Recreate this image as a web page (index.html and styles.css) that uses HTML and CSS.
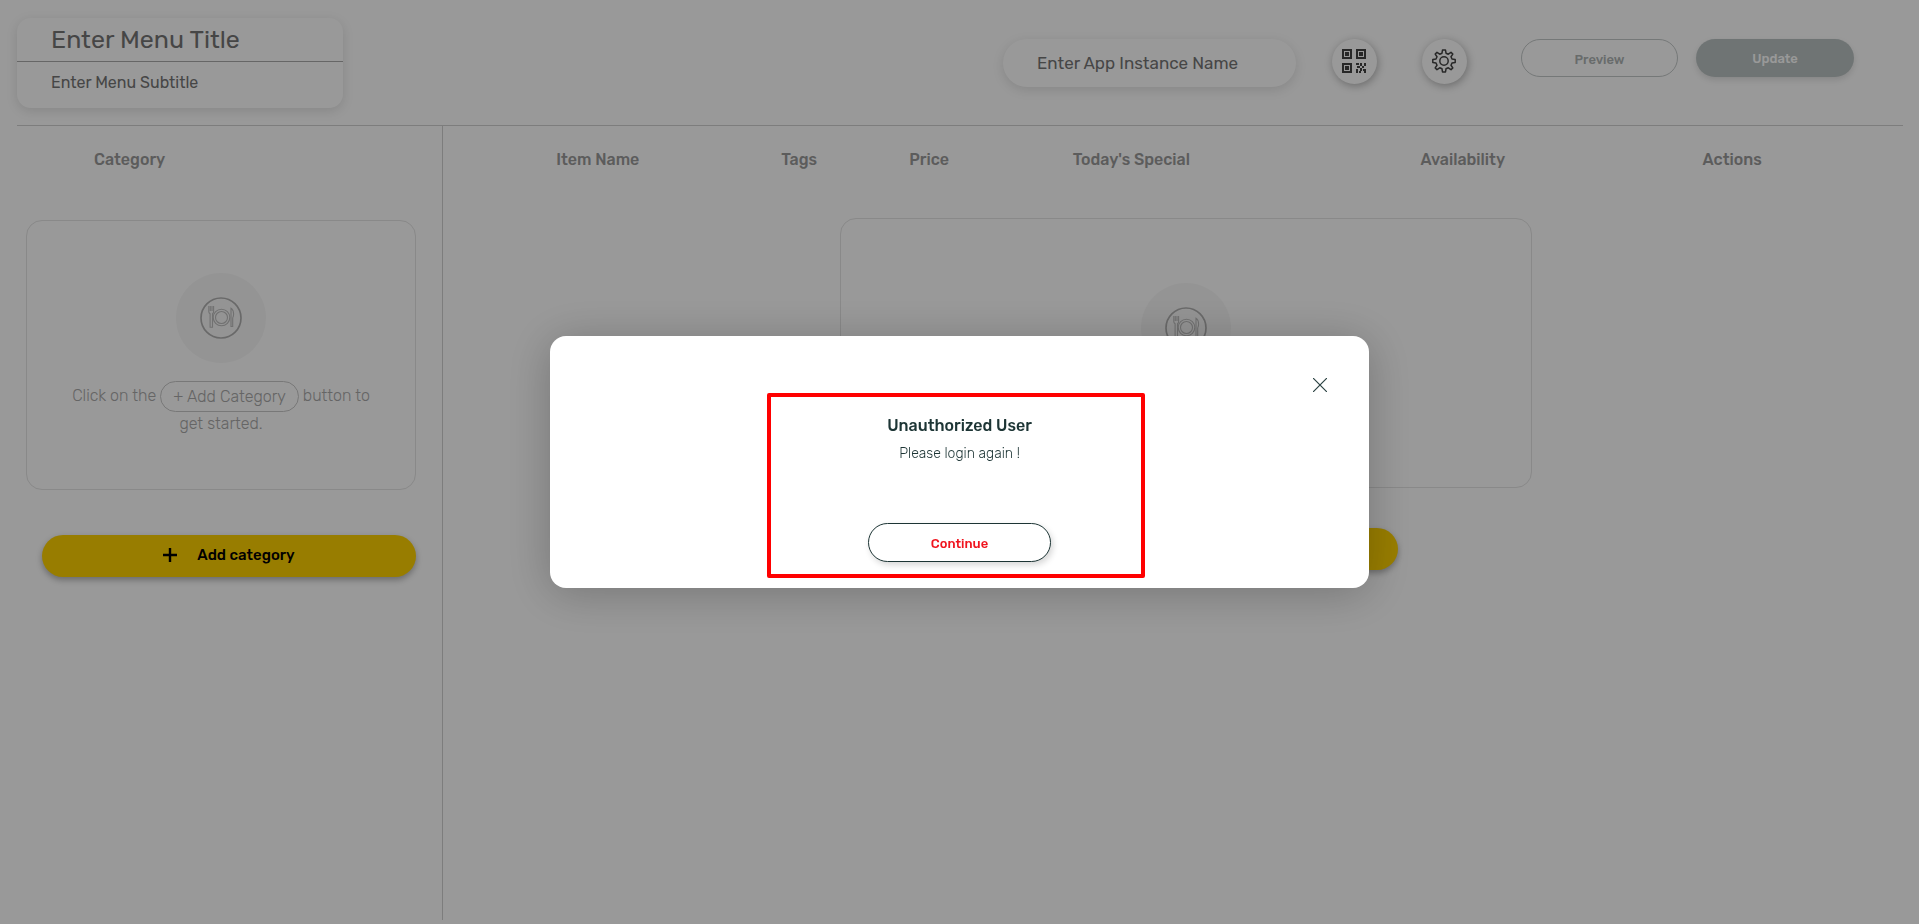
FILE: index.html
```html
<!DOCTYPE html>
<html lang="en">
  <head>
    <meta charset="utf-8">
    <title>Menu</title>
    <meta name="viewport" content="width=device-width, initial-scale=1">
    <link rel="stylesheet" href="styles.css">
  </head>
  <body>
    <!-- shared icon -->
    <svg class="sprite" width="0" height="0" aria-hidden="true">
      <symbol id="plate" viewBox="0 0 42 42">
        <circle cx="21" cy="21" r="20" fill="none" stroke="#b0b0b0" stroke-width="1.7"/>
        <g fill="none" stroke="#bcbcbc" stroke-width="1.1">
          <circle cx="21.5" cy="20.5" r="8.3"/>
          <circle cx="21.5" cy="20.5" r="6"/>
          <path d="M8.800 9v5.500q0 1.600 1.300 2.200v13.600h2.400V16.700q1.100-.6 1.100-2.200V9M10.300 9v5M12 9v5"/>
          <path d="M31 29.500V11.200q2.600 1.600 2.600 5.800 0 2.600-.9 4v8.500z"/>
        </g>
      </symbol>
    </svg>

    <div class="page">
      <header class="header">
        <div class="title-card">
          <input class="menu-title" type="text" placeholder="Enter Menu Title" aria-label="Menu title">
          <input class="menu-subtitle" type="text" placeholder="Enter Menu Subtitle" aria-label="Menu subtitle">
        </div>
        <div class="tools">
          <input class="app-name" type="text" placeholder="Enter App Instance Name" aria-label="App instance name">
          <div class="round-buttons">
            <button class="round" type="button" aria-label="QR code">
              <svg width="24" height="24" viewBox="0 0 24 24">
                <g fill="none" stroke="#444" stroke-width="2">
                  <path d="M1 1h8v8H1zM15 1h8v8h-8zM1 15h8v8H1z"/>
                </g>
                <path fill="#444" d="M3 3h4v4H3zM17 3h4v4h-4zM3 17h4v4H3zM14 14h3v2h-3zM18 14h2v3h-2zM22 14h2v3h-2zM15 17h3v2h-3zM20 17h2v2h-2zM14 20h2v4h-2zM18 19h2v3h-2zM21 20h3v2h-3zM17 22h2v2h-2zM22 22h2v2h-2z"/>
              </svg>
            </button>
            <button class="round" type="button" aria-label="Settings">
              <svg width="24" height="24" viewBox="0 0 24 24" fill="none" stroke="#444" stroke-width="1.500" stroke-linejoin="round">
                <path d="M10.500 1h3l.5 3.200 2.300 1L19 3.300 20.800 5.100 19 7.700l1 2.300 3.200.5v3l-3.200.5-1 2.300 1.800 2.600-1.800 1.800-2.700-1.900-2.300 1-.5 3.200h-3l-.5-3.200-2.300-1L5 20.700 3.200 18.900 5 16.300 4 14l-3.200-.5v-3L4 10l1-2.300L3.200 5.100 5 3.300l2.700 1.900 2.300-1z"/>
                <circle cx="12" cy="12" r="4.200"/>
              </svg>
            </button>
          </div>
          <div class="actions">
            <button class="btn preview" type="button">Preview</button>
            <button class="btn update" type="button">Update</button>
          </div>
        </div>
      </header>

      <div class="content">
        <aside class="sidebar">
          <h2 class="heading">Category</h2>
          <div class="empty-card">
            <span class="plate"><svg width="42" height="42"><use href="#plate"/></svg></span>
            <p class="hint">Click on the <span class="pill">+ Add Category</span> button to get started.</p>
          </div>
          <button class="add" type="button">
            <svg width="14" height="14" viewBox="0 0 14 14"><path d="M7 0v14M0 7h14" stroke="#000" stroke-width="2.400"/></svg>
            Add category
          </button>
        </aside>

        <main class="items">
          <table class="item-table">
            <colgroup>
              <col class="col-name">
              <col class="col-tags">
              <col class="col-price">
              <col class="col-special">
              <col class="col-available">
              <col class="col-actions">
              <col>
            </colgroup>
            <thead>
              <tr>
                <th>Item Name</th>
                <th>Tags</th>
                <th>Price</th>
                <th>Today's Special</th>
                <th>Availability</th>
                <th>Actions</th>
                <td></td>
              </tr>
            </thead>
          </table>
          <div class="items-empty">
            <div class="empty-card wide">
              <span class="plate"><svg width="42" height="42"><use href="#plate"/></svg></span>
            </div>
            <button class="add" type="button" aria-label="Add item"></button>
          </div>
        </main>
      </div>
    </div>

    <div class="overlay">
      <div class="modal" role="dialog" aria-modal="true" aria-labelledby="modal-title">
        <button class="close" type="button" aria-label="Close">
          <svg width="14" height="14" viewBox="0 0 14 14"><path d="M0 0l14 14M14 0L0 14" stroke="#2b4242" stroke-width="1.200"/></svg>
        </button>
        <h3 class="modal-title" id="modal-title">Unauthorized User</h3>
        <p class="modal-text">Please login again !</p>
        <button class="btn continue" type="button">Continue</button>
        <div class="highlight"></div>
      </div>
    </div>
  </body>
</html>
```

FILE: styles.css
```css
* {
  box-sizing: border-box;
}

body {
  margin: 0;
  background: #fff;
  font-family: Rubik, Roboto, "Liberation Sans", sans-serif;
  font-size: 16px;
  color: #333;
}

button,
input {
  font-family: inherit;
  margin: 0;
}

h2, h3, p {
  margin: 0;
}

.sprite {
  position: absolute;
}

.page {
  display: flex;
  flex-direction: column;
  height: 100vh;
  padding: 18px 16px 4px 17px;
}

/* header */
.header {
  display: flex;
  justify-content: space-between;
  padding-bottom: 17px;
  border-bottom: 1px solid #d0d0d0;
}

.title-card {
  display: flex;
  flex-direction: column;
  width: 326px;
  height: 90px;
  border-radius: 14px;
  box-shadow: 0 3px 12px rgba(0, 0, 0, 0.12);
}

.title-card input {
  width: 100%;
  padding: 0 34px;
  border: 0;
  background: none;
}

.title-card .menu-title {
  height: 44px;
  border-bottom: 1px solid #aaa;
  font-size: 25px;
}

.title-card .menu-subtitle {
  height: 41px;
  font-size: 16px;
}

input::placeholder {
  color: #757575;
  opacity: 1;
}

.tools {
  display: flex;
  align-items: flex-start;
  padding: 21px 49px 0 0;
}

.app-name {
  width: 293px;
  height: 48px;
  padding: 0 34px;
  border: 0;
  border-radius: 24px;
  background: #fff;
  box-shadow: 0 3px 12px rgba(0, 0, 0, 0.12);
  font-size: 17px;
}

.round-buttons {
  display: flex;
  gap: 45px;
  margin: 0 54px 0 36px;
}

.round {
  width: 45px;
  height: 45px;
  padding: 0 2px 1px 0;
  border: 0;
  border-radius: 50%;
  background: #fff;
  box-shadow: 1px 2px 8px rgba(0, 0, 0, 0.3);
}

.round svg {
  display: block;
  margin: 0 auto;
}

.actions {
  display: flex;
  gap: 18px;
}

.btn {
  width: 157px;
  height: 38px;
  padding: 2px 0 0;
  border-radius: 19px;
  font-size: 13px;
  font-weight: 500;
}

.preview {
  border: 1px solid #c4c9c9;
  background: #fff;
  color: #adb3b3;
}

.update {
  width: 158px;
  padding: 0;
  border: 0;
  background: #bac2c2;
  color: #fff;
  box-shadow: 0 3px 6px rgba(0, 0, 0, 0.12);
}

/* content */
.content {
  display: flex;
  flex: 1;
}

.sidebar {
  width: 426px;
  padding: 24px 26px 0 9px;
  border-right: 1px solid #d0d0d0;
}

.heading {
  padding-left: 68px;
  font-size: 16px;
  line-height: 20px;
  font-weight: 500;
  color: #999;
}

.empty-card {
  display: flex;
  flex-direction: column;
  align-items: center;
  height: 270px;
  margin-top: 50px;
  padding: 52px 36px 0;
  border: 1px solid #e4e4e4;
  border-radius: 16px;
}

.plate {
  display: flex;
  align-items: center;
  justify-content: center;
  width: 90px;
  height: 90px;
  border-radius: 50%;
  background: #f7f7f7;
}

.hint {
  margin-top: 18px;
  font-size: 16px;
  line-height: 24px;
  font-weight: 300;
  text-align: center;
  color: #a8a8a8;
}

.pill {
  display: inline-block;
  padding: 3px 12px 2px;
  border: 1px solid #c8c8c8;
  border-radius: 16px;
  vertical-align: middle;
}

.add {
  display: flex;
  align-items: center;
  justify-content: center;
  gap: 20px;
  width: calc(100% - 16px);
  height: 42px;
  margin: 45px 0 0 16px;
  padding: 0 0 2px;
  border: 0;
  border-radius: 21px;
  background: #fed100;
  box-shadow: 0 3px 6px rgba(0, 0, 0, 0.3);
  color: #000;
  font-size: 15px;
  font-weight: 500;
}

.items {
  flex: 1;
  padding-top: 24px;
}

.item-table {
  width: 100%;
  table-layout: fixed;
  border-collapse: collapse;
}

.item-table th {
  padding: 0;
  font-size: 16px;
  line-height: 20px;
  font-weight: 500;
  color: #999;
}

.col-name { width: 21.2%; }
.col-tags { width: 6.4%; }
.col-price { width: 11.4%; }
.col-special { width: 16.3%; }
.col-available { width: 29.1%; }
.col-actions { width: 7.8%; }

.items-empty {
  display: flex;
  flex-direction: column;
  align-items: center;
  padding-left: 26px;
}

.wide {
  width: 692px;
  margin-top: 48px;
  padding-top: 64px;
}

.items-empty .add {
  width: 424px;
  margin: 40px 0 0;
}

/* modal */
.overlay {
  position: fixed;
  inset: 0;
  display: flex;
  align-items: center;
  justify-content: center;
  background: rgba(0, 0, 0, 0.4);
}

.modal {
  position: relative;
  display: flex;
  flex-direction: column;
  align-items: center;
  width: 819px;
  max-width: 90%;
  padding: 80px 0 26px;
  border-radius: 16px;
  background: #fff;
  box-shadow: 0 5px 46px rgba(0, 0, 0, 0.24);
}

.close {
  position: absolute;
  top: 42px;
  right: 42px;
  padding: 0;
  border: 0;
  background: none;
}

.close svg {
  display: block;
}

.modal-title {
  font-size: 16px;
  line-height: 20px;
  font-weight: 500;
  color: #1d3535;
}

.modal-text {
  margin: 8px 0 59px;
  font-size: 14px;
  line-height: 20px;
  font-weight: 300;
  color: #1d3535;
}

.continue {
  width: 183px;
  height: 39px;
  border: 1px solid #1d3535;
  border-radius: 20px;
  background: #fff;
  color: #f0141e;
  box-shadow: 2px 3px 6px rgba(0, 0, 0, 0.16);
}

.highlight {
  position: absolute;
  top: 57px;
  left: 217px;
  width: 378px;
  height: 185px;
  border: 4px solid #f00;
  border-radius: 2px;
  pointer-events: none;
}
```
